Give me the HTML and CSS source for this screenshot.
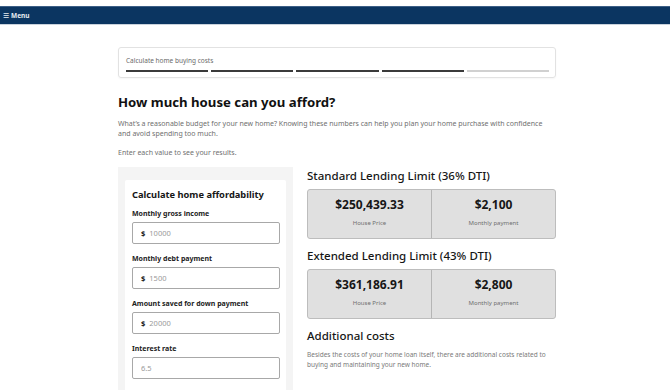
FILE: index.html
```html
<!DOCTYPE html>
<html lang="en">
<head>
  <meta charset="UTF-8">
  <meta name="viewport" content="width=device-width, initial-scale=1.0">
  <title>Home Affordability Calculator</title>
  <link rel="stylesheet" href="styles.css">
</head>
<body>
  <header class="topbar">
    <span class="menu-icon">&#9776;</span>
    <span class="menu-label">Menu</span>
  </header>

  <main class="container">
    <div class="progress-card">
      <p class="progress-title">Calculate home buying costs</p>
      <div class="progress-steps">
        <span class="step done"></span>
        <span class="step done"></span>
        <span class="step done"></span>
        <span class="step done"></span>
        <span class="step"></span>
      </div>
    </div>

    <h1 class="page-title">How much house can you afford?</h1>
    <p class="intro">What’s a reasonable budget for your new home? Knowing these numbers can help you plan your home purchase with confidence and avoid spending too much.</p>
    <p class="intro">Enter each value to see your results.</p>

    <div class="columns">
      <section class="form-panel">
        <div class="form-card">
          <h2>Calculate home affordability</h2>

          <label for="income">Monthly gross income</label>
          <div class="field">
            <span class="prefix">$</span>
            <input id="income" type="text" placeholder="10000">
          </div>

          <label for="debt">Monthly debt payment</label>
          <div class="field">
            <span class="prefix">$</span>
            <input id="debt" type="text" placeholder="1500">
          </div>

          <label for="down">Amount saved for down payment</label>
          <div class="field">
            <span class="prefix">$</span>
            <input id="down" type="text" placeholder="20000">
          </div>

          <label for="rate">Interest rate</label>
          <div class="field">
            <input id="rate" type="text" placeholder="6.5">
          </div>
        </div>
      </section>

      <section class="results">
        <h3>Standard Lending Limit (36% DTI)</h3>
        <div class="result-box">
          <div class="result-cell">
            <div class="amount">$250,439.33</div>
            <div class="caption">House Price</div>
          </div>
          <div class="result-cell">
            <div class="amount">$2,100</div>
            <div class="caption">Monthly payment</div>
          </div>
        </div>

        <h3>Extended Lending Limit (43% DTI)</h3>
        <div class="result-box">
          <div class="result-cell">
            <div class="amount">$361,186.91</div>
            <div class="caption">House Price</div>
          </div>
          <div class="result-cell">
            <div class="amount">$2,800</div>
            <div class="caption">Monthly payment</div>
          </div>
        </div>

        <h3 class="extra-title">Additional costs</h3>
        <p class="note">Besides the costs of your home loan itself, there are additional costs related to buying and maintaining your new home.</p>
      </section>
    </div>
  </main>
</body>
</html>
```

FILE: styles.css
```css
body {
  font-family: "Noto Sans", "Liberation Sans", sans-serif;
  margin: 0;
  padding: 0;
  background-color: #ffffff;
  color: #161616;
  overflow: hidden;
  height: 390px;
}

.topbar {
  margin-top: 6px;
  height: 17px;
  background-color: #0b3561;
  border-top: 1px solid #3d5f86;
  border-bottom: 1px solid #c9d2dc;
  display: flex;
  align-items: center;
  gap: 2px;
  padding-left: 3px;
  color: #e8edf3;
}

.menu-icon {
  font-size: 7px;
}

.menu-label {
  font-size: 6.5px;
  font-weight: bold;
}

.container {
  width: 438px;
  margin: 22px 0 0 118px;
}

.progress-card {
  border: 1px solid #e2e2e2;
  border-radius: 3px;
  padding: 8px 6px 5px 7px;
  box-shadow: 0 1px 2px rgba(0, 0, 0, 0.04);
}

.progress-title {
  margin: 0 0 5px;
  font-size: 6.5px;
  color: #6a6a6a;
}

.progress-steps {
  display: flex;
  gap: 3px;
}

.step {
  flex: 1;
  height: 2px;
  background-color: #d0d0d0;
}

.step.done {
  background-color: #3a3a3a;
}

.page-title {
  font-size: 13.2px;
  font-weight: 700;
  margin: 15px 0 8px;
  color: #111;
}

.intro {
  font-size: 7px;
  line-height: 10px;
  color: #6f6f6f;
  margin: 0 0 9px;
}

.columns {
  display: flex;
  gap: 14px;
  margin-top: 3px;
}

.form-panel {
  width: 161px;
  background-color: #f4f4f4;
  padding: 13px 7px 0;
  height: 240px;
}

.form-card {
  background-color: #ffffff;
  border-radius: 2px;
  padding: 8px 6px 10px 7px;
}

.form-card h2 {
  font-size: 9.3px;
  font-weight: 700;
  margin: 0 0 8px;
  color: #161616;
}

.form-card label {
  display: block;
  font-size: 7px;
  font-weight: 700;
  color: #222;
  margin-bottom: 4px;
}

.field {
  display: flex;
  align-items: center;
  gap: 4px;
  height: 20px;
  border: 1px solid #a8a8a8;
  border-radius: 2px;
  padding: 0 8px;
  margin-bottom: 10px;
}

.prefix {
  font-size: 7.5px;
  font-weight: 700;
  color: #222;
}

.field input {
  border: none;
  outline: none;
  width: 100%;
  padding: 0;
  font-family: inherit;
  font-size: 7.5px;
  background: transparent;
}

.field input::placeholder {
  color: #9a9a9a;
}

.results {
  flex: 1;
  padding-top: 2px;
}

.results h3 {
  font-size: 11.5px;
  line-height: 14px;
  font-weight: 500;
  margin: 0 0 6px;
  color: #161616;
}

.result-box {
  display: flex;
  background-color: #e0e0e0;
  border: 1px solid #bdbdbd;
  border-radius: 3px;
  height: 48px;
  margin-bottom: 10px;
}

.result-cell {
  flex: 1;
  text-align: center;
  padding-top: 6px;
}

.result-cell + .result-cell {
  border-left: 1px solid #b5b5b5;
}

.amount {
  font-size: 12px;
  font-weight: 700;
  color: #161616;
}

.caption {
  font-size: 6px;
  color: #6f6f6f;
  margin-top: 6px;
}

.results .extra-title {
  margin-top: 10px;
}

.note {
  font-size: 6.5px;
  line-height: 10px;
  color: #7a7a7a;
  margin: 7px 0 0;
}
```
